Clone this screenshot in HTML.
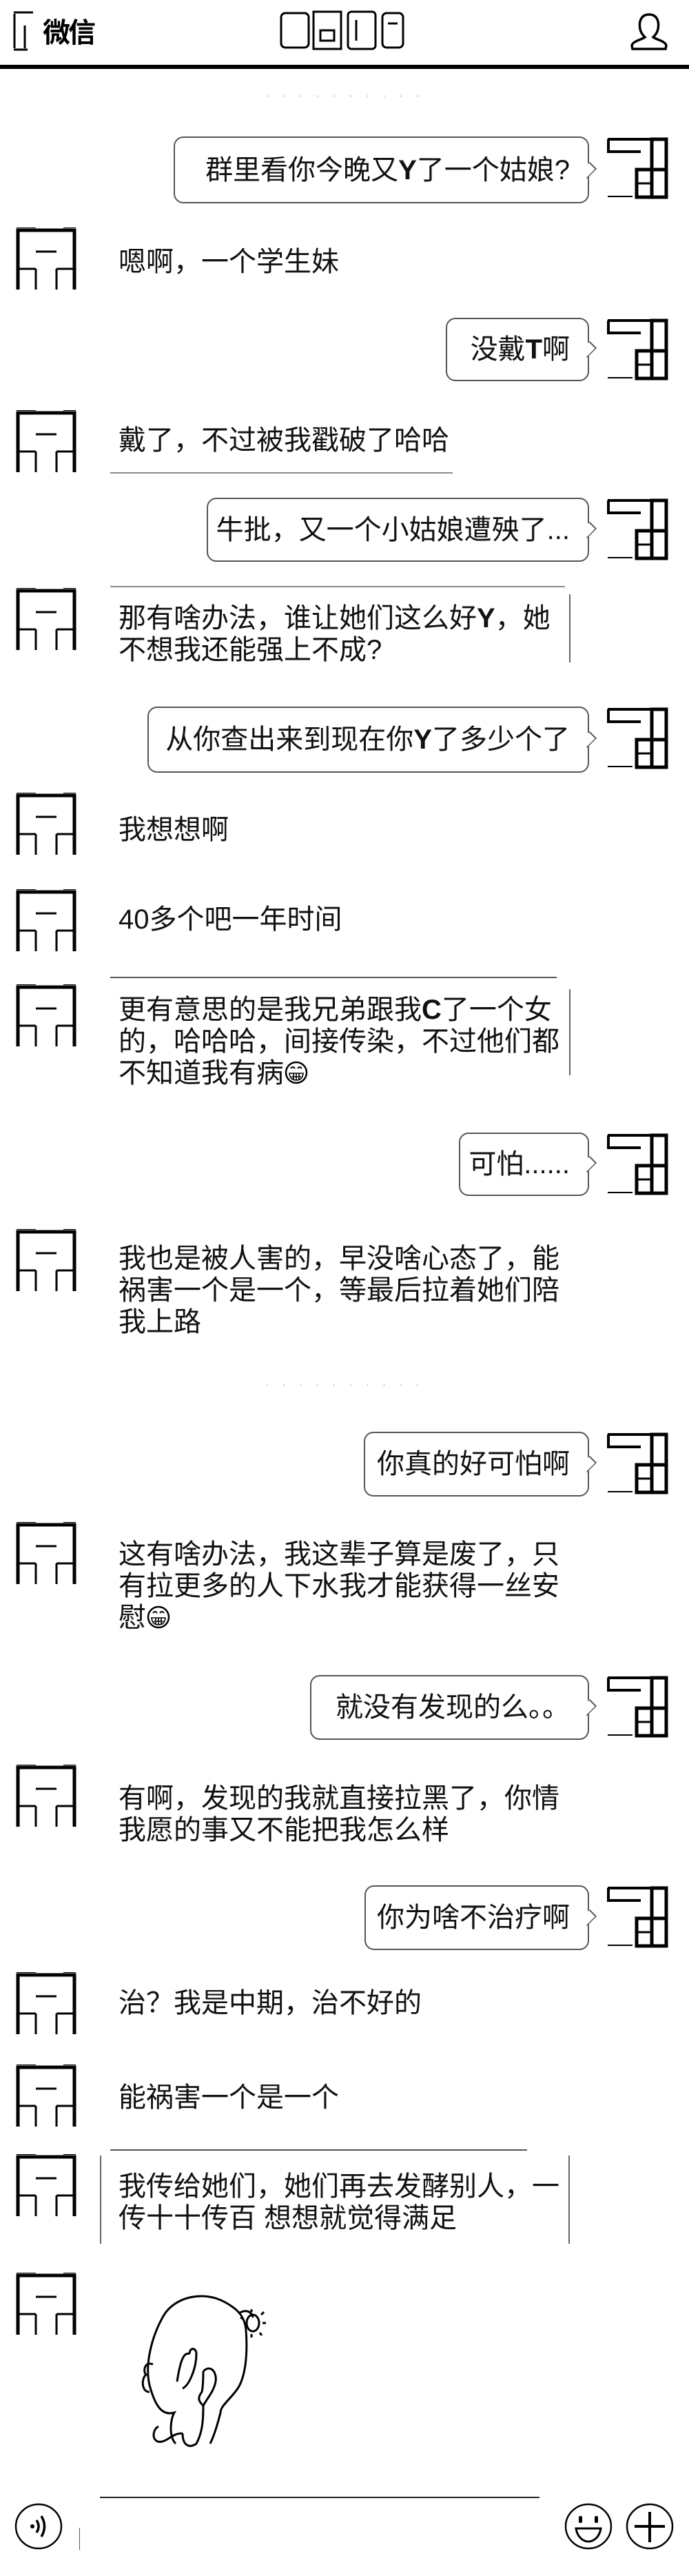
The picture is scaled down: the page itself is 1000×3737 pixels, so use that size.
<!DOCTYPE html>
<html><head><meta charset="utf-8">
<style>
*{margin:0;padding:0;box-sizing:border-box}
body{width:1000px;height:3737px;background:#fff;position:relative;overflow:hidden;font-family:"Liberation Sans","Noto Sans CJK SC",sans-serif;color:#000}
.a{position:absolute}
.t{position:absolute;left:172px;font-size:40px;line-height:46px;white-space:nowrap;color:#111}
.b{position:absolute;border:2px solid #555;border-radius:14px;background:#fff}
.b .x{position:absolute;right:26px;top:50%;transform:translateY(-50%);font-size:40px;line-height:46px;white-space:nowrap;color:#111}
.b:after{content:"";position:absolute;right:-11px;top:50%;margin-top:-10px;width:18px;height:18px;background:#fff;border-top:2px solid #555;border-right:2px solid #555;transform:rotate(45deg) scale(.7,1)}
.av{position:absolute;width:90px;height:92px}
.ln{position:absolute;background:#333}
b.y{font-family:"Liberation Sans",sans-serif;font-weight:bold}
.em{display:inline-block;width:36px;height:36px;vertical-align:-4px}
</style></head><body>

<!-- header -->
<svg class="a" style="left:18px;top:15px" width="130" height="60" viewBox="0 0 130 60">
<path d="M2 3 H30 M3 5 V55 M18 22 V55 M2 57 H22" stroke="#000" stroke-width="3" fill="none"/>
</svg>
<div class="a" style="left:62px;top:18px;font-size:40px;font-weight:bold;line-height:52px;letter-spacing:-3px;font-family:'Noto Sans CJK SC',sans-serif">微信</div>
<svg class="a" style="left:405px;top:14px" width="190" height="60" viewBox="0 0 190 60">
<g stroke="#000" stroke-width="3" fill="none">
<rect x="3" y="5" width="40" height="50" rx="6"/><rect x="50" y="3" width="40" height="54"/><rect x="100" y="3" width="40" height="54" rx="5"/><rect x="150" y="5" width="30" height="50" rx="6"/>
<path d="M60 30 H80 V45 H60Z M112 15 V45 M158 20 H172"/></g></svg>
<svg class="a" style="left:912px;top:18px" width="60" height="56" viewBox="0 0 60 56">
<path d="M30 3 C18 3 15 14 17 24 C18 30 22 34 24 36 C18 40 6 42 5 48 L6 53 H54 L55 48 C54 42 42 40 36 36 C38 34 42 30 43 24 C45 14 42 3 30 3Z" stroke="#000" stroke-width="3.5" fill="none"/></svg>
<div class="ln" style="left:0;top:94px;width:1000px;height:6px;background:#000"></div>

<div class="a" style="left:350px;top:128px;width:300px;text-align:center;font-size:20px;color:#ccc;letter-spacing:6px">· · · · · · · · · ·</div>

<!-- right bubbles -->
<div class="b" style="left:252px;top:198px;width:603px;height:97px"><span class="x">群里看你今晚又<b class="y">Y</b>了一个姑娘?</span></div>
<div class="b" style="left:647px;top:461px;width:208px;height:92px"><span class="x">没戴<b class="y">T</b>啊</span></div>
<div class="b" style="left:300px;top:722px;width:555px;height:93px"><span class="x">牛批，又一个小姑娘遭殃了...</span></div>
<div class="b" style="left:214px;top:1025px;width:641px;height:96px"><span class="x">从你查出来到现在你<b class="y">Y</b>了多少个了</span></div>
<div class="b" style="left:666px;top:1643px;width:189px;height:92px"><span class="x">可怕......</span></div>
<div class="b" style="left:528px;top:2077px;width:327px;height:94px"><span class="x">你真的好可怕啊</span></div>
<div class="b" style="left:450px;top:2430px;width:405px;height:94px"><span class="x">就没有发现的么。。</span></div>
<div class="b" style="left:529px;top:2735px;width:326px;height:94px"><span class="x">你为啥不治疗啊</span></div>

<!-- right avatars -->
<svg width="0" height="0" style="position:absolute"><defs>
<g id="ra" stroke="#000" fill="none"><path d="M2 4 H66 M3 4 V22 H50" stroke-width="4"/><rect x="66" y="4" width="21" height="84" stroke-width="5"/><rect x="44" y="48" width="43" height="40" stroke-width="5"/><path d="M44 68 H66" stroke-width="3"/><path d="M2 87 H38" stroke-width="2"/></g>
<g id="la" stroke="#000" fill="none"><path d="M4 90 V4 H86 V90" stroke-width="5"/><path d="M4 60 H30 M30 60 V90 M60 60 H86 M60 60 V90 M30 35 H60" stroke-width="3"/><path d="M2 0 H30 M70 0 H88" stroke-width="2"/></g>
<g id="em"><circle cx="18" cy="18" r="15" stroke="#000" stroke-width="2.5" fill="#fff"/><path d="M10 12 q3 -4 6 0 M20 12 q3 -4 6 0" stroke="#000" stroke-width="2" fill="none"/><path d="M8 19 H28 Q27 29 18 29 Q9 29 8 19Z M11 24 H25 M14 19 V28 M18 19 V29 M22 19 V28" stroke="#000" stroke-width="1.6" fill="none"/></g>
</defs></svg>
<svg class="av" style="left:880px;top:198px"><use href="#ra"/></svg>
<svg class="av" style="left:880px;top:461px"><use href="#ra"/></svg>
<svg class="av" style="left:880px;top:722px"><use href="#ra"/></svg>
<svg class="av" style="left:880px;top:1025px"><use href="#ra"/></svg>
<svg class="av" style="left:880px;top:1643px"><use href="#ra"/></svg>
<svg class="av" style="left:880px;top:2077px"><use href="#ra"/></svg>
<svg class="av" style="left:880px;top:2430px"><use href="#ra"/></svg>
<svg class="av" style="left:880px;top:2735px"><use href="#ra"/></svg>

<!-- left avatars -->
<svg class="av" style="left:22px;top:330px"><use href="#la"/></svg>
<svg class="av" style="left:22px;top:595px"><use href="#la"/></svg>
<svg class="av" style="left:22px;top:853px"><use href="#la"/></svg>
<svg class="av" style="left:22px;top:1150px"><use href="#la"/></svg>
<svg class="av" style="left:22px;top:1290px"><use href="#la"/></svg>
<svg class="av" style="left:22px;top:1428px"><use href="#la"/></svg>
<svg class="av" style="left:22px;top:1783px"><use href="#la"/></svg>
<svg class="av" style="left:22px;top:2208px"><use href="#la"/></svg>
<svg class="av" style="left:22px;top:2560px"><use href="#la"/></svg>
<svg class="av" style="left:22px;top:2861px"><use href="#la"/></svg>
<svg class="av" style="left:22px;top:2995px"><use href="#la"/></svg>
<svg class="av" style="left:22px;top:3125px"><use href="#la"/></svg>
<svg class="av" style="left:22px;top:3297px"><use href="#la"/></svg>

<!-- left texts -->
<div class="t" style="top:357px">嗯啊，一个学生妹</div>
<div class="t" style="top:616px">戴了，不过被我戳破了哈哈</div>
<div class="ln" style="left:160px;top:685px;width:497px;height:2px;background:#888"></div>

<div class="ln" style="left:160px;top:850px;width:660px;height:2px;background:#888"></div>
<div class="ln" style="left:826px;top:862px;width:2px;height:99px;background:#666"></div>
<div class="t" style="top:874px">那有啥办法，谁让她们这么好<b class="y">Y</b>，她<br>不想我还能强上不成?</div>

<div class="t" style="top:1181px">我想想啊</div>
<div class="t" style="top:1311px">40多个吧一年时间</div>

<div class="ln" style="left:160px;top:1417px;width:648px;height:2px;background:#555"></div>
<div class="ln" style="left:826px;top:1435px;width:2px;height:125px;background:#666"></div>
<div class="t" style="top:1442px">更有意思的是我兄弟跟我<b class="y">C</b>了一个女<br>的，哈哈哈，间接传染，不过他们都<br>不知道我有病<svg class="em"><use href="#em"/></svg></div>

<div class="t" style="top:1803px">我也是被人害的，早没啥心态了，能<br>祸害一个是一个，等最后拉着她们陪<br>我上路</div>

<div class="a" style="left:350px;top:1998px;width:300px;text-align:center;font-size:20px;color:#ccc;letter-spacing:6px">· · · · · · · · · ·</div>

<div class="t" style="top:2232px">这有啥办法，我这辈子算是废了，只<br>有拉更多的人下水我才能获得一丝安<br>慰<svg class="em"><use href="#em"/></svg></div>

<div class="t" style="top:2586px">有啊，发现的我就直接拉黑了，你情<br>我愿的事又不能把我怎么样</div>

<div class="t" style="top:2883px">治？我是中期，治不好的</div>
<div class="t" style="top:3020px">能祸害一个是一个</div>

<div class="ln" style="left:160px;top:3118px;width:605px;height:2px;background:#555"></div>
<div class="ln" style="left:145px;top:3127px;width:2px;height:128px;background:#666"></div>
<div class="ln" style="left:825px;top:3127px;width:2px;height:128px;background:#666"></div>
<div class="t" style="top:3149px">我传给她们，她们再去发酵别人，一<br>传十十传百 想想就觉得满足</div>

<!-- sticker -->
<svg class="a" style="left:165px;top:3320px" width="250" height="240" viewBox="0 0 250 240">
<g stroke="#000" stroke-width="3" fill="none">
<path d="M90 225 C80 215 82 190 88 180 C70 185 60 170 52 140 C45 110 55 70 72 40 C88 12 130 2 162 20 C180 30 190 40 192 60 C195 100 190 130 180 145 C170 160 155 170 155 180 C150 200 145 215 140 225"/>
<path d="M57 110 C45 105 42 120 47 125 C40 130 40 150 52 150"/>
<path d="M65 200 C55 205 55 225 70 222 C80 220 85 210 100 210"/>
<path d="M130 170 C130 195 128 210 120 225 C110 232 100 228 100 210"/>
<path d="M110 95 C100 90 95 115 92 135 M100 145 C110 140 120 115 120 95 C120 85 110 85 110 95"/>
<path d="M130 120 C140 110 150 120 148 135 C145 150 135 160 130 170 M130 170 C125 165 120 160 128 150 C130 140 130 130 130 120"/>
<path d="M182 36 C190 30 200 32 202 42"/>
<ellipse cx="202" cy="50" rx="9" ry="12"/>
<path d="M200 30 V34 M214 38 L218 34 M216 50 H221 M212 64 L215 68 M200 66 V71 M188 44 L184 42"/>
</g></svg>

<!-- input bar -->
<div class="ln" style="left:145px;top:3622px;width:638px;height:2px;background:#222"></div>
<div class="ln" style="left:115px;top:3667px;width:1px;height:32px;background:#555"></div>
<svg class="a" style="left:20px;top:3630px" width="75" height="72" viewBox="0 0 75 72">
<ellipse cx="36" cy="35" rx="33" ry="32" stroke="#000" stroke-width="2.5" fill="none"/>
<circle cx="27" cy="35" r="3" fill="#000"/>
<path d="M33 26 Q39 35 33 44 M40 20 Q49 35 40 50" stroke="#000" stroke-width="3.5" fill="none"/></svg>
<svg class="a" style="left:818px;top:3630px" width="75" height="72" viewBox="0 0 75 72">
<ellipse cx="36" cy="35" rx="33" ry="32" stroke="#000" stroke-width="2.5" fill="none"/>
<rect x="22" y="20" width="5" height="10" rx="2" fill="#000"/><rect x="45" y="20" width="5" height="10" rx="2" fill="#000"/>
<path d="M18 38 H54 C52 52 42 57 36 57 C30 57 20 52 18 38Z" stroke="#000" stroke-width="3" fill="none"/></svg>
<svg class="a" style="left:907px;top:3630px" width="75" height="72" viewBox="0 0 75 72">
<ellipse cx="36" cy="35" rx="33" ry="32" stroke="#000" stroke-width="2.5" fill="none"/>
<path d="M36 14 V58 M14 35 H58" stroke="#000" stroke-width="4"/></svg>

</body></html>
